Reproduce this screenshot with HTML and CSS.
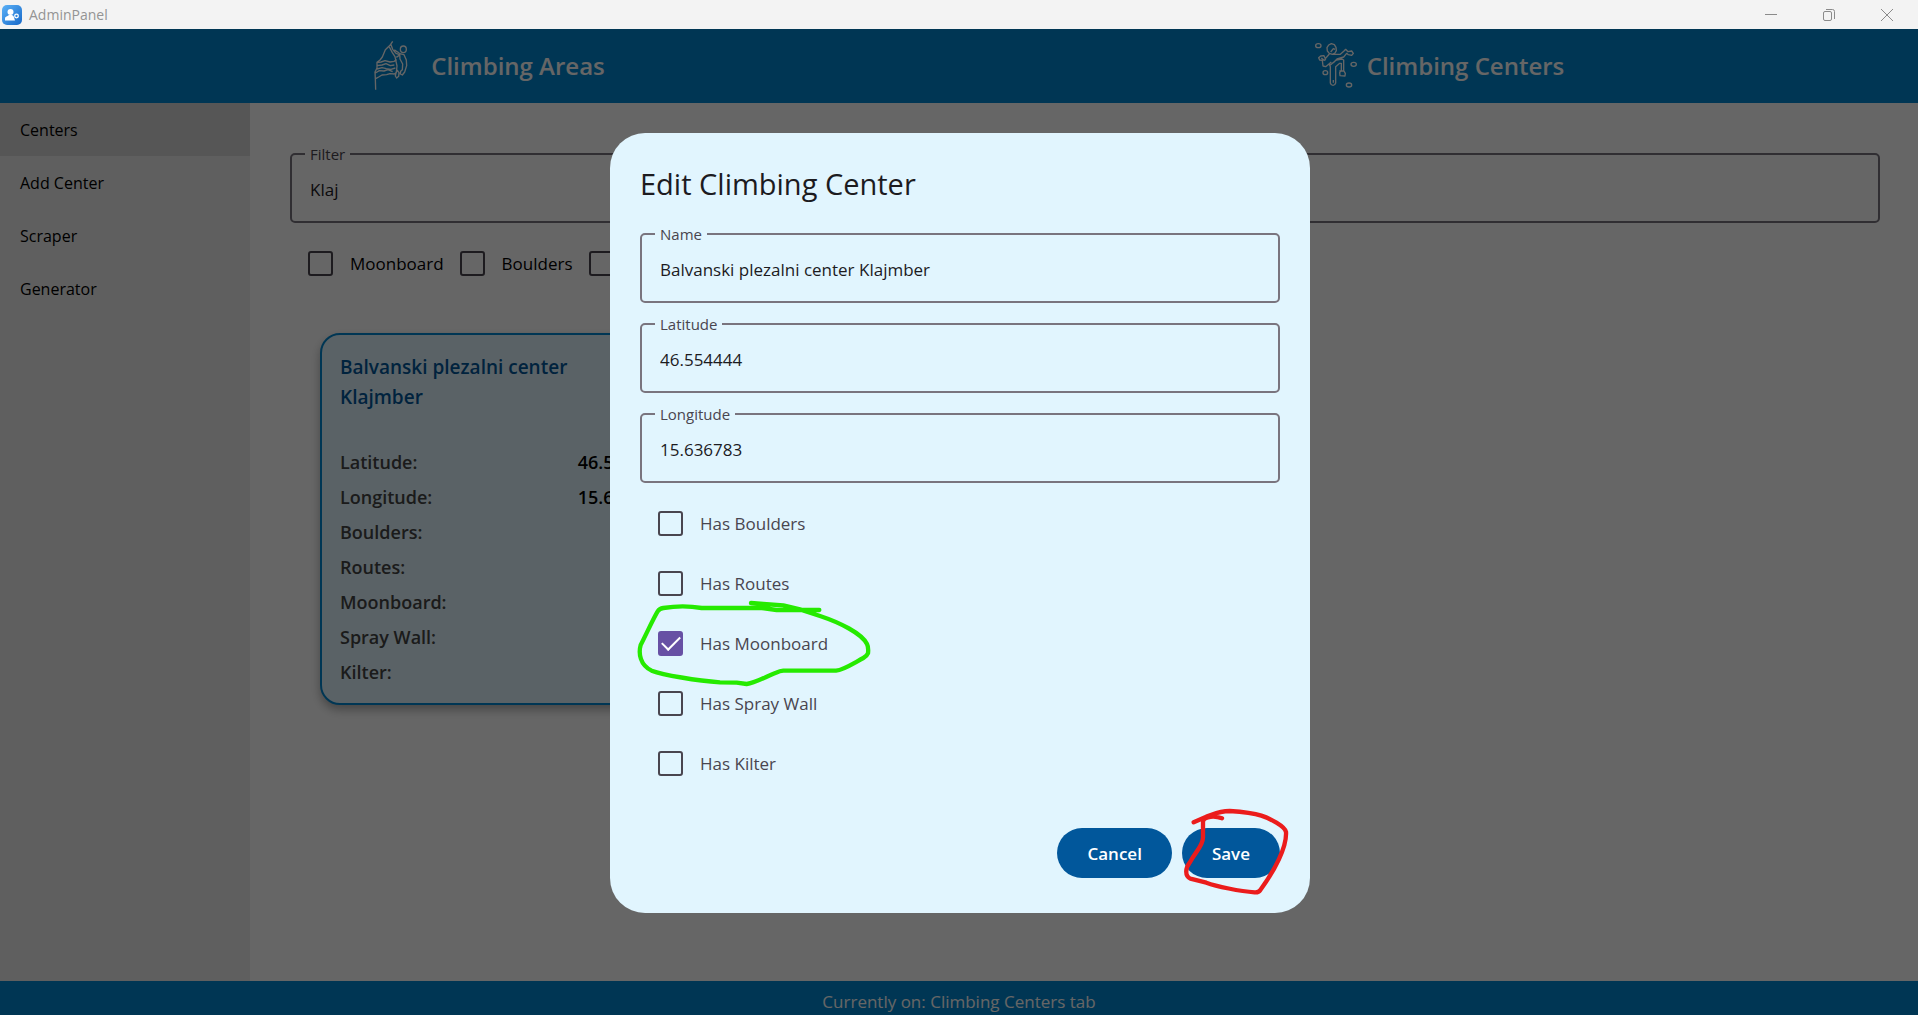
FILE: index.html
```html
<!DOCTYPE html>
<html lang="en">
<head>
<meta charset="utf-8">
<title>AdminPanel</title>
<link rel="stylesheet" href="styles.css">
</head>
<body>
<div class="titlebar">
  <svg class="app-icon" viewBox="0 0 20 20" aria-hidden="true">
    <defs><linearGradient id="app-bg" x1="0" y1="0" x2="1" y2="1"><stop offset="0" stop-color="#5cb2f8"/><stop offset="1" stop-color="#1668c8"/></linearGradient></defs>
    <rect width="20" height="20" rx="5" fill="url(#app-bg)"/>
    <circle cx="8.500" cy="7" r="3" fill="#fff"/>
    <path d="M3 15.500v-2c0-1.500 1-2 2.500-2.500l1.500-1h3l1.500 1 1.500 4.500z" fill="#fff"/>
    <circle cx="14.500" cy="11" r="1.800" fill="#2f86dc" stroke="#fff" stroke-width="1.300"/>
  </svg>
  <span class="app-name">AdminPanel</span>
  <div class="window-controls">
    <button type="button" aria-label="Minimize"><svg viewBox="0 0 14 14"><path d="M1 6.500h12"/></svg></button>
    <button type="button" aria-label="Restore"><svg viewBox="0 0 14 14"><rect x="1.500" y="3.500" width="8" height="9" rx="1.500"/><path d="M4 1.500h6.500q2 0 2 2V11"/></svg></button>
    <button type="button" aria-label="Close"><svg viewBox="0 0 14 14"><path d="M1 1l12 12M13 1L1 13"/></svg></button>
  </div>
</div>

<div class="app">
  <nav class="tabs">
    <a class="tab" href="#areas">
      <svg class="areas-icon" viewBox="0 30 183 159" aria-hidden="true">
        <path d="M98 37l-8 12-14 13-9 22-7 9-9 7v17l-6 12 1 20 1 33M50 101l13-2 12-4 15 4 12-2 8-5M51 110l15-2 12-4 13 6 12-2M51 120l15-4 13 3 14 2 13-4M46 132l12-7 14 1 12-4 14 6M47 149l9-5 10-6 14-1 10-3 13 1 7-5M93 47l5 14 10 12 11 4M88 54l9 17 8 12 3 14 3 14-2 18M103 62l8 6 7 4M119 78l-10 7M119 74l13 3 7 16 1 17-6 19-7 9-6-3 1-8 5-5 1-17-8-15zM112 124l5 7-1 11-6 5-4-6 2-10z"/>
        <ellipse cx="130" cy="61" rx="9" ry="10"/>
      </svg>
      Climbing Areas
    </a>
    <a class="tab" href="#centers">
      <svg class="centers-icon" viewBox="45 41 126 144" aria-hidden="true">
        <ellipse cx="55" cy="55" rx="8" ry="6"/><ellipse cx="76" cy="136" rx="7" ry="6"/><ellipse cx="161" cy="111" rx="8" ry="6"/><ellipse cx="147" cy="173" rx="8" ry="6"/>
        <path d="M88 78l-6-7-1-10 5-8 8-4 9 3 5 8 1 10-4 7-8 4zM92 74l8-10 5 2M97 81h24l11-10 5-5 7 7 11-2 5 7-5 6-10-2-5-4-9 11-20 6-11 11M88 80l-12 14-4-9-10 1-6 5 3 7 8 1 2 17 8 2 17-14M64 92l8 7 6-3M87 109l4 9v49q2 7 8 7t8-7v-49l12-10h5v22l-5 6 1 9 15 1 1-8-5-8V98l-5-3-17 3-19 16M100 166v-8M118 131h15"/>
      </svg>
      Climbing Centers
    </a>
  </nav>

  <div class="body">
    <nav class="sidebar">
      <a class="selected" href="#list">Centers</a>
      <a href="#add">Add Center</a>
      <a href="#scraper">Scraper</a>
      <a href="#generator">Generator</a>
    </nav>
    <main class="content">
      <fieldset class="field">
        <legend><label for="filter">Filter</label></legend>
        <input id="filter" type="text" value="Klaj">
      </fieldset>
      <div class="filters">
        <label class="check"><input type="checkbox">Moonboard</label>
        <label class="check"><input type="checkbox">Boulders</label>
        <label class="check"><input type="checkbox">Routes</label>
      </div>
      <article class="card">
        <h2>Balvanski plezalni center Klajmber</h2>
        <dl>
          <div><dt>Latitude:</dt><dd>46.554444</dd></div>
          <div><dt>Longitude:</dt><dd>15.636783</dd></div>
          <div><dt>Boulders:</dt><dd></dd></div>
          <div><dt>Routes:</dt><dd></dd></div>
          <div><dt>Moonboard:</dt><dd></dd></div>
          <div><dt>Spray Wall:</dt><dd></dd></div>
          <div><dt>Kilter:</dt><dd></dd></div>
        </dl>
      </article>
    </main>
  </div>

  <footer class="status">Currently on: Climbing Centers tab</footer>

  <div class="scrim">
    <form class="dialog" role="dialog" aria-labelledby="dialog-title">
      <h1 id="dialog-title">Edit Climbing Center</h1>
      <div class="fields">
        <fieldset class="field">
          <legend><label for="name">Name</label></legend>
          <input id="name" type="text" value="Balvanski plezalni center Klajmber">
        </fieldset>
        <fieldset class="field">
          <legend><label for="latitude">Latitude</label></legend>
          <input id="latitude" type="text" value="46.554444">
        </fieldset>
        <fieldset class="field">
          <legend><label for="longitude">Longitude</label></legend>
          <input id="longitude" type="text" value="15.636783">
        </fieldset>
      </div>
      <div class="options">
        <label class="check"><input type="checkbox">Has Boulders</label>
        <label class="check"><input type="checkbox">Has Routes</label>
        <div class="marked">
          <label class="check"><input type="checkbox" checked>Has Moonboard</label>
          <svg class="mark-green" viewBox="45 330 711 261" aria-hidden="true">
            <path d="M393 339L430 342L490 346L540 358L600 378C660 398 725 430 741 462Q746 472 744 490Q741 498 730 504C700 520 670 540 648 542H490Q480 543 468 548C440 558 410 578 380 582L350 578L300 577C230 572 130 555 95 542C60 525 55 490 62 465C80 430 100 385 113 364Q118 356 130 354C160 349 205 347 245 354H425L470 360H598"/>
          </svg>
        </div>
        <label class="check"><input type="checkbox">Has Spray Wall</label>
        <label class="check"><input type="checkbox">Has Kilter</label>
      </div>
      <div class="actions">
        <button type="button">Cancel</button>
        <div class="marked">
          <button type="submit">Save</button>
          <svg class="mark-red" viewBox="430 50 321 270" aria-hidden="true">
            <path d="M462 96L500 79C520 73 535 62 570 62C600 64 640 68 665 76C690 84 736 108 739 125C742 170 705 240 662 299Q657 307 645 306C600 303 530 288 500 277L452 265C434 256 438 232 450 217C470 180 489 168 490 142V95Q490 84 505 81Q525 76 547 84"/>
          </svg>
        </div>
      </div>
    </form>
  </div>
</div>
</body>
</html>
```
FILE: styles.css
```css
* { box-sizing: border-box; }

body {
  margin: 0;
  height: 100vh;
  display: flex;
  flex-direction: column;
  font-family: "Open Sans", "Noto Sans", sans-serif;
  font-size: 17px;
  line-height: 25px;
  color: #000;
}

button, input { font: inherit; }
a { color: inherit; text-decoration: none; }

/* Window title bar */
.titlebar {
  display: flex;
  align-items: center;
  height: 29px;
  padding: 0 2px;
  background: #f3f3f3;
  color: #949494;
}
.app-icon { width: 20px; height: 20px; }
.app-name { margin-left: 7px; font-size: 14px; }
.window-controls { display: flex; margin-left: auto; }
.window-controls button {
  display: grid;
  place-items: center;
  width: 58px;
  height: 28px;
  padding: 0;
  border: 0;
  background: none;
}
.window-controls svg {
  width: 14px;
  height: 14px;
  fill: none;
  stroke: #8a8a8a;
}

.app {
  position: relative;
  flex: 1;
  display: flex;
  flex-direction: column;
}

/* Top tabs */
.tabs {
  display: grid;
  grid-template-columns: 1fr 1fr;
  height: 74px;
  padding: 0 0 2px 4px;
  background: #0288d1;
  color: #fff;
}
.tab {
  display: flex;
  align-items: center;
  justify-content: center;
  gap: 10px;
  font-size: 24px;
  font-weight: 600;
}
.tab svg {
  fill: none;
  stroke: #fff;
  stroke-width: 4;
  stroke-linejoin: round;
}
.areas-icon { width: 61px; height: 53px; }
.centers-icon { width: 42px; height: 48px; }

/* Page body */
.body { flex: 1; display: flex; }
.sidebar { width: 250px; background: #eee; font-size: 16px; }
.sidebar a { display: block; padding: 15px 20px 13px; }
.sidebar .selected { background: #d7d7d7; }
.content { flex: 1; padding: 40px 38px 0 40px; background: #fff; }

.field {
  height: 80px;
  min-width: 0;
  margin: 0;
  padding: 0 13px;
  border: 2px solid #79747e;
  border-radius: 5px;
}
.field legend {
  padding: 0 5px;
  font-size: 15px;
  line-height: 22px;
  color: #49454f;
}
.field input {
  display: block;
  width: 100%;
  height: 48px;
  padding: 0 5px;
  border: 0;
  outline: 0;
  background: none;
  color: #1c1b1f;
}

.check { display: flex; align-items: center; gap: 17px; height: 60px; }
.check input {
  appearance: none;
  display: grid;
  place-items: center;
  width: 25px;
  height: 25px;
  margin: 0;
  border: 2px solid #49454f;
  border-radius: 3px;
}
.check input:checked { border-color: #6750a4; background: #6750a4; }
.check input:checked::after {
  content: "";
  width: 16px;
  height: 8px;
  margin-bottom: 5px;
  border: solid #fff;
  border-width: 0 0 2px 2px;
  transform: rotate(-45deg);
}

.filters { display: flex; gap: 16px; margin-top: 10px; padding-left: 18px; }

.card {
  width: 365px;
  margin: 40px 30px;
  padding: 17px 18px 18px;
  border: 2px solid #0288d1;
  border-radius: 20px;
  background: #e1f5fe;
  box-shadow: 0 5px 10px rgba(0, 0, 0, 0.3);
  font-size: 18px;
  font-weight: 600;
}
.card h2 {
  width: 250px;
  margin: 0 0 38px;
  font-size: 19px;
  line-height: 30px;
  font-weight: 600;
  color: #01579b;
}
.card dl { display: grid; gap: 10px; margin: 0; }
.card dl div { display: flex; justify-content: space-between; }
.card dt { color: #444; }
.card dd { margin: 0; }

.status {
  height: 34px;
  padding-top: 8px;
  background: #0288d1;
  color: #fff;
  text-align: center;
}

/* Modal */
.scrim {
  position: absolute;
  inset: 0;
  display: grid;
  place-items: center;
  padding: 2px 0 0 2px;
  background: rgba(0, 0, 0, 0.6);
}
.dialog {
  width: 700px;
  padding: 30px 30px 35px;
  border-radius: 35px;
  background: #e1f5fe;
}
.dialog h1 {
  margin: 0 0 16px;
  font-size: 29px;
  line-height: 42px;
  padding-bottom: 2px;
  font-weight: 400;
  color: #1c1b1f;
}
.fields { display: grid; gap: 10px; }
.options { padding: 10px 0 0 18px; color: #49454f; }
.actions { display: flex; justify-content: flex-end; gap: 10px; margin-top: 35px; }
.actions button {
  display: block;
  height: 50px;
  padding: 0 30px;
  border: 0;
  border-radius: 25px;
  background: #01579b;
  color: #fff;
  font-weight: 600;
}

/* Pen marks over the dialog */
.marked { position: relative; }
.marked svg { position: absolute; fill: none; stroke-linecap: round; stroke-linejoin: round; pointer-events: none; }
.mark-green { left: -23px; top: -13px; width: 237px; height: 87px; stroke: #26ea00; stroke-width: 13; }
.mark-red { left: 1px; top: -21px; width: 107px; height: 90px; stroke: #eb1c1c; stroke-width: 13; }
```
